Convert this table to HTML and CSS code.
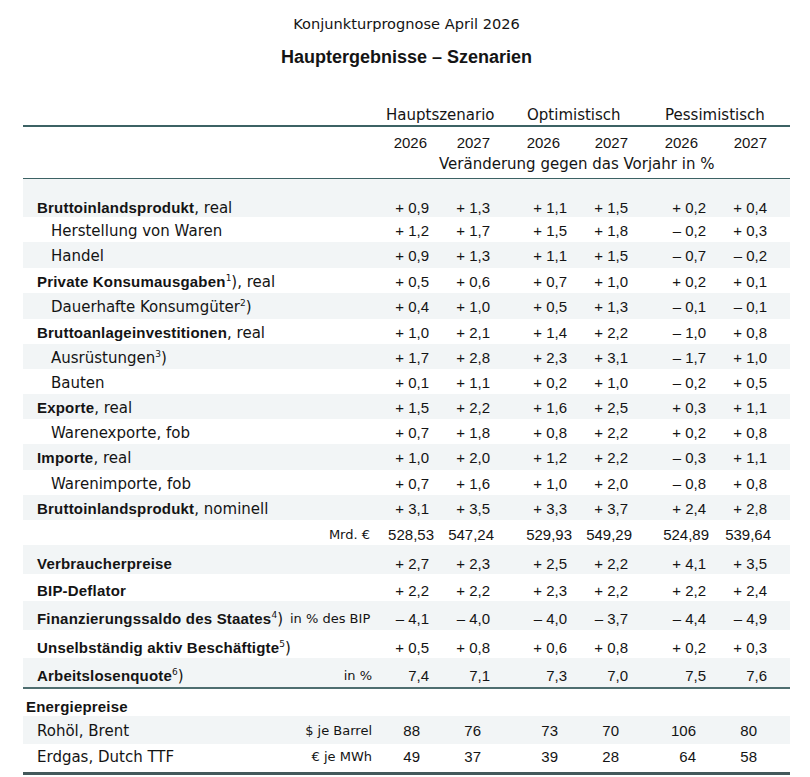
FILE: index.html
```html
<!DOCTYPE html>
<html lang="de">
<head>
  <meta charset="UTF-8" />
  <meta name="viewport" content="width=device-width, initial-scale=1.0" />
  <title>Konjunkturprognose April 2026 – Hauptergebnisse</title>
  <link rel="stylesheet" href="styles.css">
</head>
<body>
<div class="report">
  <!-- ========= Title ========= -->
  <div class="kicker">Konjunkturprognose April 2026</div>
  <h1 class="title">Hauptergebnisse – Szenarien</h1>

  <!-- ========= Table ========= -->
  <table class="results">
    <colgroup>
      <col class="c-label"><col class="c-unit">
      <col class="c1"><col class="c2"><col class="c3"><col class="c4"><col class="c5"><col class="c6">
    </colgroup>
    <thead>
      <tr class="r-group">
        <th></th><th></th>
        <th colspan="2" class="g-main">Hauptszenario</th>
        <th colspan="2" class="g-opt">Optimistisch</th>
        <th colspan="2" class="g-pes">Pessimistisch</th>
      </tr>
      <tr class="r-years">
        <th></th><th></th>
        <th class="y">2026</th><th class="y">2027</th>
        <th class="y">2026</th><th class="y">2027</th>
        <th class="y">2026</th><th class="y">2027</th>
      </tr>
      <tr class="r-note">
        <th></th><th></th>
        <th colspan="6" class="note">Veränderung gegen das Vorjahr in %</th>
      </tr>
    </thead>
    <tbody>
      <tr class="r-spacer alt"><td colspan="8"></td></tr>
      <tr class="r-first alt">
        <td class="lbl"><b>Bruttoinlandsprodukt</b>, real</td><td class="unit"></td>
        <td class="n">+ 0,9</td><td class="n">+ 1,3</td><td class="n">+ 1,1</td><td class="n">+ 1,5</td><td class="n">+ 0,2</td><td class="n">+ 0,4</td>
      </tr>
      <tr>
        <td class="lbl sub">Herstellung von Waren</td><td class="unit"></td>
        <td class="n">+ 1,2</td><td class="n">+ 1,7</td><td class="n">+ 1,5</td><td class="n">+ 1,8</td><td class="n">– 0,2</td><td class="n">+ 0,3</td>
      </tr>
      <tr class="alt tall">
        <td class="lbl sub">Handel</td><td class="unit"></td>
        <td class="n">+ 0,9</td><td class="n">+ 1,3</td><td class="n">+ 1,1</td><td class="n">+ 1,5</td><td class="n">– 0,7</td><td class="n">– 0,2</td>
      </tr>
      <tr>
        <td class="lbl"><b>Private Konsumausgaben</b><sup>1</sup>), real</td><td class="unit"></td>
        <td class="n">+ 0,5</td><td class="n">+ 0,6</td><td class="n">+ 0,7</td><td class="n">+ 1,0</td><td class="n">+ 0,2</td><td class="n">+ 0,1</td>
      </tr>
      <tr class="alt tall">
        <td class="lbl sub">Dauerhafte Konsumgüter<sup>2</sup>)</td><td class="unit"></td>
        <td class="n">+ 0,4</td><td class="n">+ 1,0</td><td class="n">+ 0,5</td><td class="n">+ 1,3</td><td class="n">– 0,1</td><td class="n">– 0,1</td>
      </tr>
      <tr>
        <td class="lbl"><b>Bruttoanlageinvestitionen</b>, real</td><td class="unit"></td>
        <td class="n">+ 1,0</td><td class="n">+ 2,1</td><td class="n">+ 1,4</td><td class="n">+ 2,2</td><td class="n">– 1,0</td><td class="n">+ 0,8</td>
      </tr>
      <tr class="alt">
        <td class="lbl sub">Ausrüstungen<sup>3</sup>)</td><td class="unit"></td>
        <td class="n">+ 1,7</td><td class="n">+ 2,8</td><td class="n">+ 2,3</td><td class="n">+ 3,1</td><td class="n">– 1,7</td><td class="n">+ 1,0</td>
      </tr>
      <tr>
        <td class="lbl sub">Bauten</td><td class="unit"></td>
        <td class="n">+ 0,1</td><td class="n">+ 1,1</td><td class="n">+ 0,2</td><td class="n">+ 1,0</td><td class="n">– 0,2</td><td class="n">+ 0,5</td>
      </tr>
      <tr class="alt">
        <td class="lbl"><b>Exporte</b>, real</td><td class="unit"></td>
        <td class="n">+ 1,5</td><td class="n">+ 2,2</td><td class="n">+ 1,6</td><td class="n">+ 2,5</td><td class="n">+ 0,3</td><td class="n">+ 1,1</td>
      </tr>
      <tr>
        <td class="lbl sub">Warenexporte, fob</td><td class="unit"></td>
        <td class="n">+ 0,7</td><td class="n">+ 1,8</td><td class="n">+ 0,8</td><td class="n">+ 2,2</td><td class="n">+ 0,2</td><td class="n">+ 0,8</td>
      </tr>
      <tr class="alt tall">
        <td class="lbl"><b>Importe</b>, real</td><td class="unit"></td>
        <td class="n">+ 1,0</td><td class="n">+ 2,0</td><td class="n">+ 1,2</td><td class="n">+ 2,2</td><td class="n">– 0,3</td><td class="n">+ 1,1</td>
      </tr>
      <tr>
        <td class="lbl sub">Warenimporte, fob</td><td class="unit"></td>
        <td class="n">+ 0,7</td><td class="n">+ 1,6</td><td class="n">+ 1,0</td><td class="n">+ 2,0</td><td class="n">– 0,8</td><td class="n">+ 0,8</td>
      </tr>
      <tr class="alt">
        <td class="lbl"><b>Bruttoinlandsprodukt</b>, nominell</td><td class="unit"></td>
        <td class="n">+ 3,1</td><td class="n">+ 3,5</td><td class="n">+ 3,3</td><td class="n">+ 3,7</td><td class="n">+ 2,4</td><td class="n">+ 2,8</td>
      </tr>
      <tr class="r-mrd">
        <td class="lbl"></td><td class="unit">Mrd. €</td>
        <td class="n">528,53</td><td class="n">547,24</td><td class="n">529,93</td><td class="n">549,29</td><td class="n">524,89</td><td class="n">539,64</td>
      </tr>
      <tr class="r-vpi alt">
        <td class="lbl"><b>Verbraucherpreise</b></td><td class="unit"></td>
        <td class="n">+ 2,7</td><td class="n">+ 2,3</td><td class="n">+ 2,5</td><td class="n">+ 2,2</td><td class="n">+ 4,1</td><td class="n">+ 3,5</td>
      </tr>
      <tr class="r-defl">
        <td class="lbl"><b>BIP-Deflator</b></td><td class="unit"></td>
        <td class="n">+ 2,2</td><td class="n">+ 2,2</td><td class="n">+ 2,3</td><td class="n">+ 2,2</td><td class="n">+ 2,2</td><td class="n">+ 2,4</td>
      </tr>
      <tr class="r-fin alt">
        <td class="lbl"><b>Finanzierungssaldo des Staates</b><sup>4</sup>)</td><td class="unit">in % des BIP</td>
        <td class="n">– 4,1</td><td class="n">– 4,0</td><td class="n">– 4,0</td><td class="n">– 3,7</td><td class="n">– 4,4</td><td class="n">– 4,9</td>
      </tr>
      <tr class="r-uns">
        <td class="lbl"><b>Unselbständig aktiv Beschäftigte</b><sup>5</sup>)</td><td class="unit"></td>
        <td class="n">+ 0,5</td><td class="n">+ 0,8</td><td class="n">+ 0,6</td><td class="n">+ 0,8</td><td class="n">+ 0,2</td><td class="n">+ 0,3</td>
      </tr>
      <tr class="r-alq alt">
        <td class="lbl"><b>Arbeitslosenquote</b><sup>6</sup>)</td><td class="unit">in %</td>
        <td class="n">7,4</td><td class="n">7,1</td><td class="n">7,3</td><td class="n">7,0</td><td class="n">7,5</td><td class="n">7,6</td>
      </tr>
      <tr class="r-en">
        <td class="lbl grp" colspan="2"><b>Energiepreise</b></td>
        <td class="n"></td><td class="n"></td><td class="n"></td><td class="n"></td><td class="n"></td><td class="n"></td>
      </tr>
      <tr class="r-oil energy alt">
        <td class="lbl">Rohöl, Brent</td><td class="unit">$ je Barrel</td>
        <td class="n">88</td><td class="n">76</td><td class="n">73</td><td class="n">70</td><td class="n">106</td><td class="n">80</td>
      </tr>
      <tr class="r-gas energy">
        <td class="lbl">Erdgas, Dutch TTF</td><td class="unit">€ je MWh</td>
        <td class="n">49</td><td class="n">37</td><td class="n">39</td><td class="n">28</td><td class="n">64</td><td class="n">58</td>
      </tr>
    </tbody>
  </table>
</div>
</body>
</html>
```

FILE: styles.css
```css
:root {
  --ink: #141414;
  --band: #f2f5f6;
  --rule: #3c6264;
  --rule-2: #4f6e70;
  --rule-3: #44595b;
}

/* ===== Reset ===== */
*, *::before, *::after { box-sizing: border-box; }
body {
  margin: 0;
  font-family: "DejaVu Sans", "Liberation Sans", sans-serif;
  font-size: 15px;
  color: var(--ink);
  background: #fff;
}

/* ===== Layout ===== */
.report { width: 767px; margin-left: 23px; }

.kicker {
  text-align: center;
  line-height: 20px;
  padding-top: 14px;
  font-size: 14.6px;
}
.title {
  margin: 11px 0 0;
  text-align: center;
  font: bold 18px/24px "Liberation Sans", Arial, sans-serif;
}

/* ===== Table ===== */
.results {
  margin-top: 31px;
  width: 767px;
  table-layout: fixed;
  border-collapse: separate;
  border-spacing: 0;
}
.c-label { width: 267px; }
.c-unit  { width: 88px; }
.c1 { width: 57px; }
.c2 { width: 61px; }
.c3 { width: 77px; }
.c4 { width: 61px; }
.c5 { width: 78px; }
.c6 { width: 78px; }

th, td {
  padding: 5px 0 2px;
  line-height: 18px;
  vertical-align: top;
  white-space: nowrap;
  font-weight: normal;
}
tr.alt td { background: var(--band); }
tr.tall td { padding-bottom: 3px; }

b {
  font-family: "Liberation Sans", Arial, sans-serif;
  font-weight: bold;
  letter-spacing: 0.2px;
}
sup { font-size: 9px; line-height: 0; vertical-align: 6px; }

/* header rows */
.r-group th { padding: 6px 0 1px; text-align: left; border-bottom: 2px solid var(--rule); }
.g-main { padding-left: 8px !important; }
.g-opt  { padding-left: 31px !important; }
.g-pes  { padding-left: 31px !important; }

.r-years th { padding: 7px 0 1px; text-align: right; font-family: "Liberation Sans", Arial, sans-serif; }
.r-years th:nth-child(3) { padding-right: 8px; }
.r-years th:nth-child(4) { padding-right: 6px; }
.r-years th:nth-child(5) { padding-right: 13px; }
.r-years th:nth-child(6) { padding-right: 6px; }
.r-years th:nth-child(7) { padding-right: 14px; }
.r-years th:nth-child(8) { padding-right: 23px; }

.r-note th { padding: 2px 0 5px; border-bottom: 1px solid var(--rule); }
.note { text-align: left; padding-left: 61px !important; }

/* labels and units */
.lbl { padding-left: 14px; }
.lbl.sub { padding-left: 28px; }
.lbl.grp { padding-left: 3px; }
.unit {
  text-align: right;
  padding-right: 6px;
  font-size: 13px;
}

/* numbers */
.n {
  text-align: right;
  padding-right: 6px;
  font-family: "Liberation Sans", Arial, sans-serif;
}
.n:last-child { padding-right: 23px; }

/* row heights */
.r-spacer td { height: 13px; padding: 0; }
.r-first td { padding-top: 7px; padding-bottom: 0; }

.r-mrd td { padding-top: 6px; padding-bottom: 2px; line-height: 17px; }
.r-mrd .unit { padding-right: 8px; }
.r-mrd .n:nth-child(3) { padding-right: 1px; }
.r-mrd .n:nth-child(4) { padding-right: 2px; }
.r-mrd .n:nth-child(5) { padding-right: 1px; }
.r-mrd .n:nth-child(6) { padding-right: 2px; }
.r-mrd .n:nth-child(7) { padding-right: 3px; }
.r-mrd .n:nth-child(8) { padding-right: 19px; }

.r-vpi td  { padding-top: 10px; padding-bottom: 1px; }
.r-defl td { padding-top: 8px;  padding-bottom: 1px; }
.r-fin td  { padding-top: 9px;  padding-bottom: 2px; }
.r-fin .unit { padding-right: 8px; }
.r-uns td  { padding-top: 9px;  padding-bottom: 1px; }
.r-alq td  { padding-top: 9px;  padding-bottom: 2px; border-bottom: 2px solid var(--rule-2); }
.r-en td   { padding-top: 9px;  padding-bottom: 0; }
.r-oil td  { padding-top: 6px;  padding-bottom: 4px; }
.r-gas td  { padding-top: 4px;  padding-bottom: 6px; border-bottom: 3px solid var(--rule-3); }

.energy .n:nth-child(3),
.energy .n:nth-child(4),
.energy .n:nth-child(5),
.energy .n:nth-child(6) { padding-right: 15px; }
.energy .n:nth-child(7) { padding-right: 16px; }
.energy .n:nth-child(8) { padding-right: 33px; }
```
